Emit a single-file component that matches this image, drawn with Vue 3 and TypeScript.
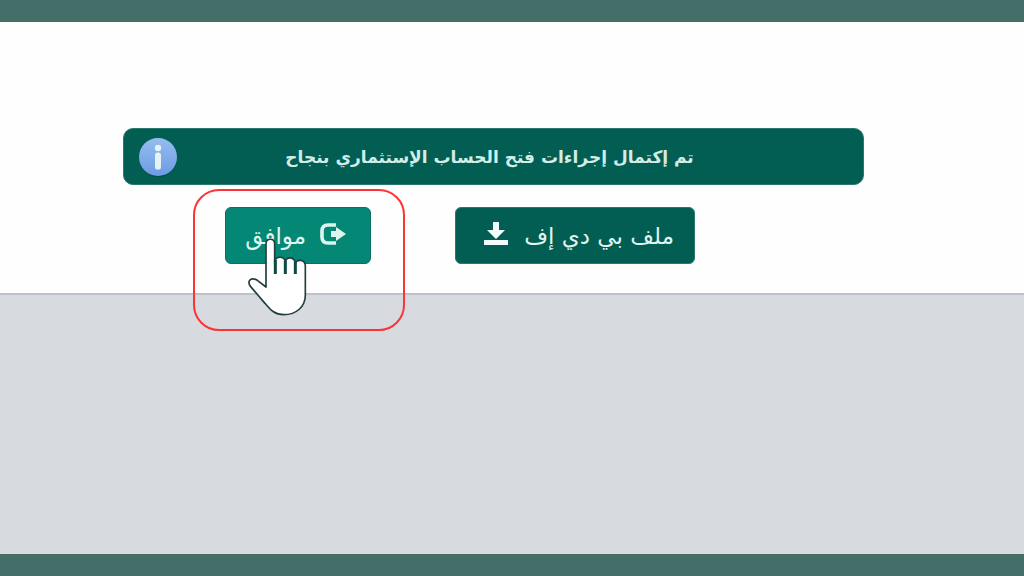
<script setup lang="ts">
const message: string = 'تم إكتمال إجراءات فتح الحساب الإستثماري بنجاح'
const pdfLabel: string = 'ملف بي دي إف'
const okLabel: string = 'موافق'
</script>

<template>
  <div class="page" dir="rtl" lang="ar">
    <main class="sheet">
      <div class="notice" role="status">
        <p class="message">{{ message }}</p>
        <svg class="info" viewBox="0 0 40 40" aria-hidden="true">
          <defs>
            <linearGradient id="infoFill" x1="0" y1="0" x2="0" y2="1">
              <stop offset="0" stop-color="#95bdf0" />
              <stop offset="1" stop-color="#6c9ce2" />
            </linearGradient>
          </defs>
          <circle cx="20" cy="22" r="18" fill="#064a48" />
          <circle cx="20" cy="20" r="19" fill="url(#infoFill)" />
          <circle cx="20" cy="11" r="3.2" fill="#e6f3f4" />
          <rect x="17" y="15.5" width="6" height="17" rx="2.6" fill="#e6f3f4" />
        </svg>
      </div>
      <div class="actions">
        <button type="button" class="btn pdf">
          <span>{{ pdfLabel }}</span>
          <svg class="download" viewBox="0 0 24 24" aria-hidden="true">
            <path d="M9 0h6v8h6l-9 9-9-9h6z M0 18h24v5H0z" fill="#f2fbf9" />
          </svg>
        </button>
        <div class="target">
          <button type="button" class="btn ok">
            <svg class="exit" viewBox="0 0 26 22" aria-hidden="true">
              <path d="M16 2H8Q2 2 2 8v6q0 6 6 6h8" fill="none" stroke="#def5ef" stroke-width="3.6" />
              <path d="M11 8h5V4l10 7-10 7v-4h-5z" fill="#def5ef" />
            </svg>
            <span>{{ okLabel }}</span>
          </button>
          <div class="frame"></div>
          <svg class="hand" viewBox="186 168 186 240" aria-hidden="true">
            <path
              d="M243 321V192C243 173 269 173 269 192V246C272 227 298 227 301 246C304 229 328 229 331 250C335 237 361 237 361 258V346C361 380 334 404 296 404C270 404 256 390 240 370L197 320C184 302 199 290 217 301Z"
              fill="#fff" stroke="#223f3c" stroke-width="5" stroke-linejoin="round"
            />
            <path d="M271 240V282M301 242V282M331 246V282" fill="none" stroke="#0d4a42" stroke-width="9" />
          </svg>
        </div>
      </div>
    </main>
  </div>
</template>

<style>
body {
  margin: 0;
}
</style>

<style scoped>
.page {
  box-sizing: border-box;
  min-height: 100vh;
  border-top: 22px solid #446e68;
  border-bottom: 22px solid #446e68;
  background: #d7dbe0;
  font-family: "DejaVu Sans", sans-serif;
}
.sheet {
  padding: 106px 160px 29px 123px;
  border-bottom: 2px solid #bfc1ca;
  background: #fefefe;
}
.notice {
  display: flex;
  align-items: center;
  box-sizing: border-box;
  min-height: 57px;
  padding: 0 14px;
  border: 1px solid #287a6e;
  border-radius: 10px;
  background: #025e52;
  color: #d2ece6;
}
.message {
  flex: 1;
  margin: 0;
  padding-right: 48px;
  font-size: 17px;
  font-weight: 700;
  line-height: 28px;
  text-align: center;
}
.info {
  width: 40px;
  height: 40px;
}
.actions {
  display: flex;
  gap: 84px;
  margin-top: 22px;
  padding-right: 169px;
}
.btn {
  display: flex;
  align-items: center;
  box-sizing: border-box;
  height: 57px;
  margin: 0;
  border: 1px solid #28796e;
  border-radius: 6px;
  background: #025e52;
  color: #e0f5f0;
  font-family: inherit;
  font-size: 23px;
  line-height: 28px;
  white-space: nowrap;
  cursor: pointer;
}
.btn svg {
  margin-bottom: 4px;
}
.pdf {
  width: 240px;
  padding: 0 20px;
  gap: 16px;
}
.ok {
  width: 146px;
  padding: 0 24px;
  gap: 14px;
  border-color: #0b6f61;
  background: #048775;
}
.download {
  width: 24px;
  height: 24px;
}
.exit {
  flex: none;
  width: 26px;
  height: 22px;
}
.target {
  position: relative;
}
.frame {
  position: absolute;
  top: -18px;
  left: -32px;
  box-sizing: border-box;
  width: 212px;
  height: 142px;
  border: 2px solid #fb3438;
  border-radius: 26px;
  pointer-events: none;
}
.hand {
  position: absolute;
  top: 29px;
  left: 22px;
  width: 62px;
  height: 80px;
  pointer-events: none;
}
</style>
